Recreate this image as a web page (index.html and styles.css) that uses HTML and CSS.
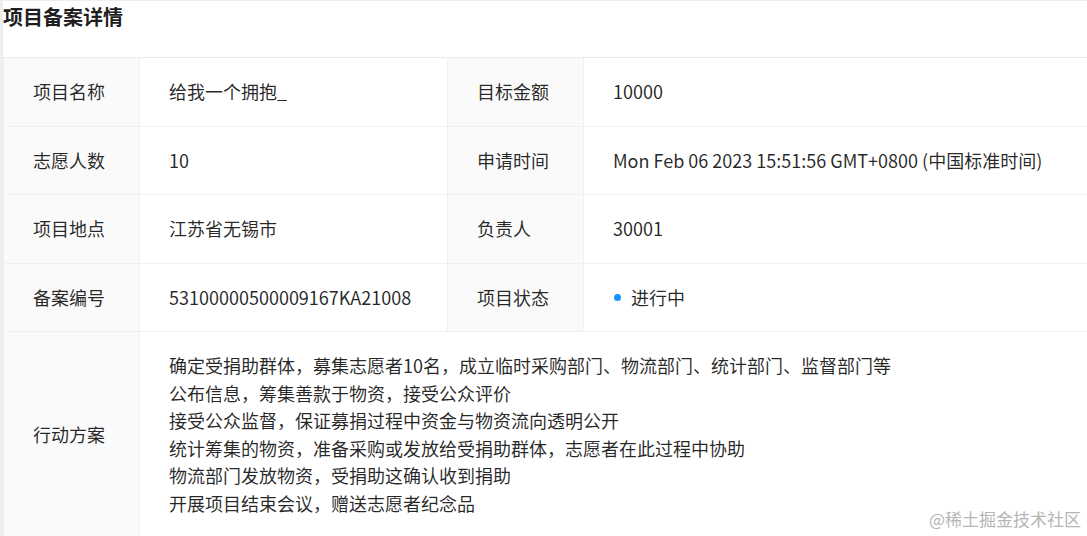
FILE: index.html
```html
<!DOCTYPE html>
<html lang="zh-CN">
<head>
  <meta charset="UTF-8">
  <title>项目备案详情</title>
  <link rel="stylesheet" href="styles.css">
</head>
<body>
  <div class="card">
    <div class="desc-title">项目备案详情</div>
    <table class="desc">
      <colgroup>
        <col class="col-label">
        <col class="col-value">
        <col class="col-label">
        <col>
      </colgroup>
      <tr>
        <th>项目名称</th>
        <td>给我一个拥抱_</td>
        <th>目标金额</th>
        <td>10000</td>
      </tr>
      <tr>
        <th>志愿人数</th>
        <td>10</td>
        <th>申请时间</th>
        <td>Mon Feb 06 2023 15:51:56 GMT+0800 (中国标准时间)</td>
      </tr>
      <tr>
        <th>项目地点</th>
        <td>江苏省无锡市</td>
        <th>负责人</th>
        <td>30001</td>
      </tr>
      <tr>
        <th>备案编号</th>
        <td>53100000500009167KA21008</td>
        <th>项目状态</th>
        <td><span class="dot"></span>进行中</td>
      </tr>
      <tr>
        <th>行动方案</th>
        <td colspan="3">
          确定受捐助群体，募集志愿者10名，成立临时采购部门、物流部门、统计部门、监督部门等<br>
          公布信息，筹集善款于物资，接受公众评价<br>
          接受公众监督，保证募捐过程中资金与物资流向透明公开<br>
          统计筹集的物资，准备采购或发放给受捐助群体，志愿者在此过程中协助<br>
          物流部门发放物资，受捐助这确认收到捐助<br>
          开展项目结束会议，赠送志愿者纪念品
        </td>
      </tr>
    </table>
  </div>
  <div class="watermark">@稀土掘金技术社区</div>
</body>
</html>
```

FILE: styles.css
```css
body {
  margin: 0;
  padding: 1px 0 0 3px;
  background-color: #eeeeee;
  font-family: "Noto Sans CJK SC", sans-serif;
  color: rgba(0, 0, 0, 0.85);
  height: 535px;
  overflow: hidden;
}
.card {
  background-color: white;
  width: 1120px;
  height: 100%;
}
.desc-title {
  font-size: 20px;
  font-weight: bold;
  line-height: 31px;
  margin-bottom: 25px;
  color: rgba(0, 0, 0, 0.9);
}
.desc {
  border-collapse: collapse;
  table-layout: fixed;
  width: 1120px;
  font-size: 18px;
  line-height: 27.5px;
}
.col-label {
  width: 136px;
}
.col-value:nth-child(2) {
  width: 308px;
}
.desc th,
.desc td {
  border: 1px solid #f0f0f0;
  padding: 20px 29px;
  text-align: left;
  white-space: nowrap;
}
.desc th {
  font-weight: normal;
  background-color: #fafafa;
}
.desc tr:first-child th,
.desc tr:first-child td {
  border-top-color: #ebebeb;
}
.dot {
  display: inline-block;
  width: 7px;
  height: 7px;
  border-radius: 50%;
  background-color: #1890ff;
  margin: 0 10px 0 1px;
  vertical-align: middle;
  position: relative;
  top: -2px;
}
.watermark {
  position: absolute;
  right: 6px;
  bottom: 5px;
  font-size: 17px;
  color: #b5b5b5;
}
```
